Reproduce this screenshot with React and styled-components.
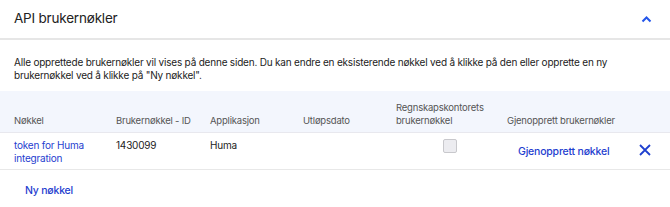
import React from "react";
import styled, { createGlobalStyle } from "styled-components";

const GlobalStyle = createGlobalStyle`
  body {
    margin: 0;
    background: #fff;
    font-family: Inter, "Noto Sans", sans-serif;
    color: #222;
    letter-spacing: -0.2px;
  }
`;

const Panel = styled.div`
  width: 670px;
`;

const Header = styled.div`
  height: 38px;
  display: flex;
  align-items: center;
  justify-content: space-between;
  padding: 0 14px;
  border-bottom: 2px solid #e6e6e6;
`;

const Title = styled.h2`
  margin: 0 0 2px;
  font-size: 13.5px;
  font-weight: 400;
  color: #222;
`;

const Toggle = styled.button`
  border: none;
  background: none;
  padding: 0;
  margin-right: 4px;
  display: flex;
  cursor: pointer;
`;

const Description = styled.p`
  margin: 0;
  padding: 16px 14px 9px;
  font-size: 10px;
  line-height: 13px;
  color: #222;
`;

const Grid = styled.div`
  display: grid;
  grid-template-columns: 102px 94px 93px 93px 111px 1fr 50px;
`;

const HeadCell = styled.div`
  background: #f3f6fd;
  height: 42px;
  box-sizing: border-box;
  padding: 0 0 5px 14px;
  display: flex;
  align-items: flex-end;
  font-size: 9.5px;
  line-height: 13px;
  color: #555;
  border-bottom: 1px solid #e8e8ee;
`;

const Cell = styled.div`
  height: 37px;
  box-sizing: border-box;
  padding: 6px 0 0 ${({ $pad }) => $pad ?? 14}px;
  font-size: 10px;
  line-height: 13px;
  color: ${({ $link }) => ($link ? "#1f40cf" : "#222")};
  border-bottom: 1px solid #e8e8e8;
`;

const Box = styled.span`
  display: block;
  width: 12px;
  height: 12px;
  margin-left: 47px;
  border: 1px solid #c8c8cc;
  border-radius: 2px;
  background: #ececf0;
`;

const LinkButton = styled.button`
  border: none;
  background: none;
  padding: 0;
  margin-top: ${({ $top }) => $top ?? 0}px;
  font-family: inherit;
  letter-spacing: inherit;
  font-size: 10.5px;
  font-weight: 500;
  color: #1f40cf;
  cursor: pointer;
`;

const CloseButton = styled(Toggle)`
  margin: 5px 0 0 19px;
`;

const Footer = styled.div`
  padding: 8px 25px;
`;

function ChevronUp() {
  return (
    <svg width="11" height="8" viewBox="0 0 11 8">
      <path d="M1.5 6.5 L5.5 2.5 L9.5 6.5" fill="none" stroke="#2456ea" strokeWidth="2" />
    </svg>
  );
}

function Close() {
  return (
    <svg width="12" height="12" viewBox="0 0 12 12">
      <path d="M1 1 L11 11 M11 1 L1 11" stroke="#1f40cf" strokeWidth="1.8" />
    </svg>
  );
}

const columns = [
  "Nøkkel",
  "Brukernøkkel - ID",
  "Applikasjon",
  "Utløpsdato",
  "Regnskapskontorets brukernøkkel",
  "Gjenopprett brukernøkler",
  "",
];

export default function App() {
  return (
    <Panel>
      <GlobalStyle />
      <Header>
        <Title>API brukernøkler</Title>
        <Toggle>
          <ChevronUp />
        </Toggle>
      </Header>
      <Description>
        Alle opprettede brukernøkler vil vises på denne siden. Du kan endre en
        eksisterende nøkkel ved å klikke på den eller opprette en ny
        brukernøkkel ved å klikke på "Ny nøkkel".
      </Description>
      <Grid>
        {columns.map((c, i) => (
          <HeadCell key={i}>{c}</HeadCell>
        ))}
        <Cell $link>token for Huma integration</Cell>
        <Cell>1430099</Cell>
        <Cell>Huma</Cell>
        <Cell />
        <Cell>
          <Box />
        </Cell>
        <Cell $pad={25}>
          <LinkButton $top={6}>Gjenopprett nøkkel</LinkButton>
        </Cell>
        <Cell $pad={0}>
          <CloseButton>
            <Close />
          </CloseButton>
        </Cell>
      </Grid>
      <Footer>
        <LinkButton>Ny nøkkel</LinkButton>
      </Footer>
    </Panel>
  );
}
